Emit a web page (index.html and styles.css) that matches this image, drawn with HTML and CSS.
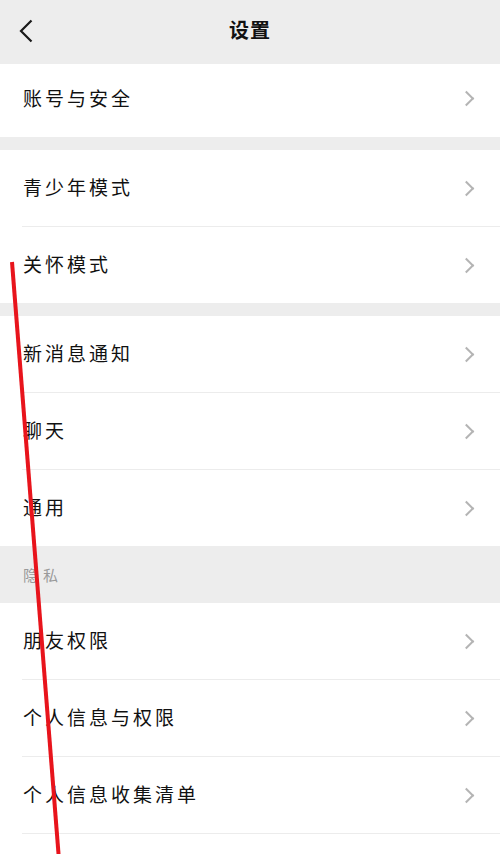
FILE: index.html
```html
<!DOCTYPE html>
<html lang="zh">
<head>
<meta charset="utf-8">
<link rel="stylesheet" href="styles.css">
</head>
<body>
<div class="page">
  <header class="topbar">
    <svg class="back" viewBox="0 0 14 24" width="14" height="24"><path d="M12.5 1.5 L2 12 L12.5 22.5" fill="none" stroke="#1a1a1a" stroke-width="2.2"/></svg>
    <div class="title">设置</div>
  </header>

  <section class="group">
    <div class="row first"><span class="label">账号与安全</span><span class="chev"></span></div>
  </section>

  <section class="group spaced">
    <div class="row"><span class="label">青少年模式</span><span class="chev"></span></div>
    <div class="row"><span class="label">关怀模式</span><span class="chev"></span></div>
  </section>

  <section class="group spaced">
    <div class="row"><span class="label">新消息通知</span><span class="chev"></span></div>
    <div class="row"><span class="label">聊天</span><span class="chev"></span></div>
    <div class="row"><span class="label">通用</span><span class="chev"></span></div>
  </section>

  <div class="section-title">隐私</div>

  <section class="group">
    <div class="row"><span class="label">朋友权限</span><span class="chev"></span></div>
    <div class="row"><span class="label">个人信息与权限</span><span class="chev"></span></div>
    <div class="row"><span class="label">个人信息收集清单</span><span class="chev"></span></div>
    <div class="row"><span class="label">&nbsp;</span><span class="chev"></span></div>
  </section>

  <svg class="annot" viewBox="0 0 500 854" width="500" height="854"><line x1="12" y1="262" x2="59" y2="860" stroke="#e8141c" stroke-width="4"/></svg>
</div>
</body>
</html>
```

FILE: styles.css
```css
html, body {
  margin: 0;
  padding: 0;
}
body {
  background: #ededed;
  font-family: "Noto Sans CJK SC", "Noto Sans", sans-serif;
  color: #111;
}
.page {
  position: relative;
  width: 500px;
  height: 854px;
  overflow: hidden;
  background: #ededed;
}
.topbar {
  height: 64px;
  display: flex;
  align-items: center;
  justify-content: center;
  position: relative;
  background: #ededed;
}
.back {
  position: absolute;
  left: 19px;
  top: 19px;
}
.title {
  font-size: 20px;
  font-weight: 700;
  letter-spacing: 1px;
  margin-top: -6px;
}
.group {
  background: #fff;
}
.group.spaced {
  margin-top: 13px;
}
.row {
  height: 76px;
  box-sizing: border-box;
  display: flex;
  align-items: center;
  justify-content: space-between;
  padding: 0 26px 0 23px;
  position: relative;
}
.row.first {
  height: 73px;
}
.row.first .label {
  margin-top: -6px;
}
.row.first .chev {
  margin-top: -4px;
}
.row + .row {
  height: 77px;
  padding-top: 1px;
}
.row + .row::before {
  content: "";
  position: absolute;
  top: 0;
  left: 22px;
  right: 0;
  height: 1px;
  background: #ececec;
}
.label {
  font-size: 19px;
  letter-spacing: 3px;
  line-height: 1;
  margin-top: -3px;
}
.chev {
  width: 9px;
  height: 9px;
  border-top: 2px solid #b4b4b4;
  border-right: 2px solid #b4b4b4;
  transform: rotate(45deg);
  margin-right: 2px;
}
.section-title {
  height: 57px;
  display: flex;
  align-items: center;
  padding-left: 23px;
  font-size: 15px;
  letter-spacing: 5px;
  color: #9a9a9a;
}
.annot {
  position: absolute;
  left: 0;
  top: 0;
  pointer-events: none;
}
```
